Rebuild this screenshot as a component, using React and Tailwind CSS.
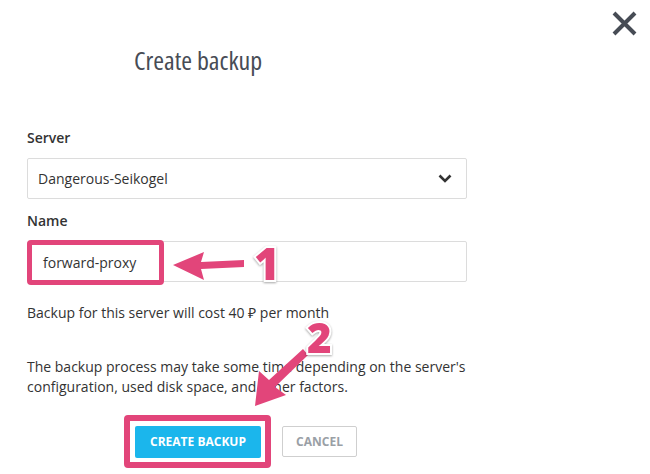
import React from "react";

const pink = "#e2457a";

const CreateBackup = () => {
  return (
    <div className="relative w-[650px] h-[474px] bg-white overflow-hidden font-['Open_Sans',sans-serif] text-[#333]">
      {/* close */}
      <button className="absolute left-[612px] top-[11px] w-[25px] h-[25px]">
        <svg viewBox="0 0 25 25" className="w-[25px] h-[25px]">
          <path d="M2 2 L23 23 M23 2 L2 23" stroke="#474c55" strokeWidth="4" strokeLinecap="butt" fill="none" />
        </svg>
      </button>

      <h2 className="pt-[43px] pl-[134px] text-[26px] leading-[34px] text-[#474c55] [font-stretch:75%]">Create backup</h2>

      <form className="mt-[51px] ml-[27px] w-[440px]">
        <label className="block text-[14px] leading-[20px] font-semibold">Server</label>
        <div className="mt-[10px] h-[41px] border border-[#dcdcdc] rounded-[2px] flex items-center justify-between pl-[10px] pr-[14px]">
          <span className="text-[14px]">Dangerous-Seikogel</span>
          <svg viewBox="0 0 14 9" className="w-[14px] h-[9px]">
            <path d="M1.5 1.5 L7 7 L12.5 1.5" stroke="#333" strokeWidth="2.6" fill="none" />
          </svg>
        </div>

        <label className="block mt-[12px] text-[14px] leading-[20px] font-semibold">Name</label>
        <div className="mt-[10px] h-[41px] border border-[#dcdcdc] rounded-[2px] flex items-center pl-[15px]">
          <span className="text-[14px]">forward-proxy</span>
        </div>

        <p className="mt-[21px] text-[14px] leading-[20px]">Backup for this server will cost 40 ₽ per month</p>
        <p className="mt-[34px] text-[14px] leading-[20px]">
          The backup process may take some time depending on the server's configuration, used disk space, and other factors.
        </p>

        <div className="mt-[29px] flex gap-[21px] pl-[108px]">
          <button type="button" className="w-[126px] h-[32px] bg-[#1bb6ec] text-white text-[12px] font-bold rounded-[2px]">
            CREATE BACKUP
          </button>
          <button type="button" className="w-[75px] h-[31px] border border-[#cfcfcf] text-[#9aa0a6] text-[12px] font-bold rounded-[2px]">
            CANCEL
          </button>
        </div>
      </form>

      {/* annotations */}
      <div className="absolute left-[27px] top-[240px] w-[137px] h-[45px] border-[5px] rounded-[4px] bg-white flex items-center pl-[11px]" style={{ borderColor: pink }}>
        <span className="text-[14px]">forward-proxy</span>
      </div>
      <svg className="absolute left-[170px] top-[248px]" width="80" height="36" viewBox="0 0 80 36">
        <path d="M3 17 L34 4 L31 14 L74 12 L74 19 L31 21 L34 32 Z" fill={pink} />
      </svg>
      <span
        className="absolute left-[254px] top-[237px] text-[44px] leading-[52px] font-extrabold [-webkit-text-stroke:4px_white] [paint-order:stroke_fill] drop-shadow-[0_1px_1px_rgba(0,0,0,0.35)]"
        style={{ color: pink }}
      >
        1
      </span>

      <div className="absolute left-[124px] top-[415px] w-[147px] h-[53px] border-[6px] rounded-[4px]" style={{ borderColor: pink }} />
      <svg className="absolute left-[250px] top-[345px]" width="60" height="66" viewBox="0 0 60 66">
        <path d="M5 61 L9 26 L19 35 L53 4 L58 10 L25 42 L36 50 Z" fill={pink} />
      </svg>
      <span
        className="absolute left-[307px] top-[312px] text-[42px] leading-[50px] font-extrabold [-webkit-text-stroke:4px_white] [paint-order:stroke_fill] drop-shadow-[0_1px_1px_rgba(0,0,0,0.35)]"
        style={{ color: pink }}
      >
        2
      </span>
    </div>
  );
};

export default CreateBackup;
